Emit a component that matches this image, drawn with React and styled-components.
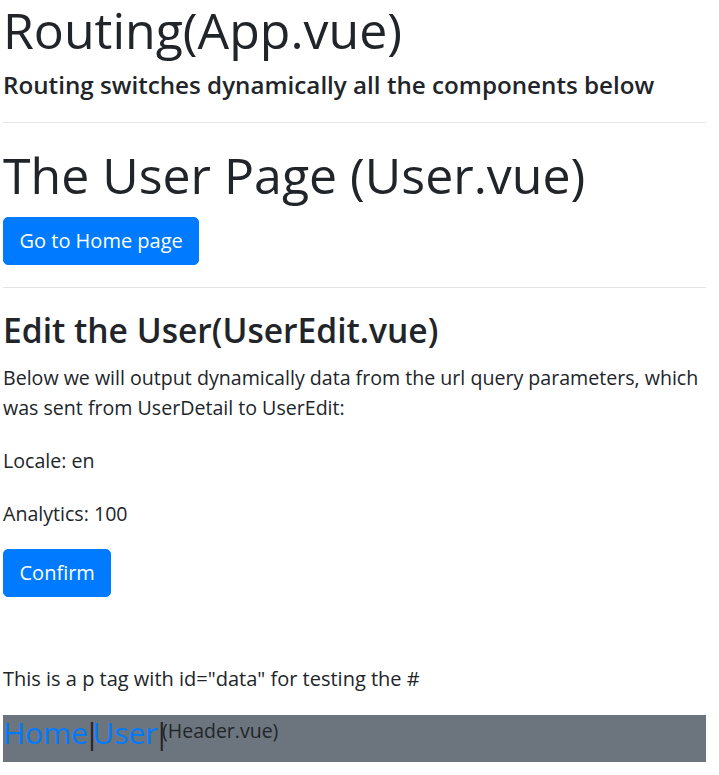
import React from 'react';
import styled, { createGlobalStyle } from 'styled-components';

const GlobalStyle = createGlobalStyle`
	* {
		box-sizing: border-box;
	}
	body {
		margin: 0;
		background: #fff;
		color: #212529;
		font-family: 'Open Sans', 'Noto Sans', sans-serif;
		font-size: 20px;
		line-height: 30px;
	}
`;

const Page = styled.div`
	padding: 0 13px 0 3px;
`;

const Title = styled.h1`
	margin: 0 0 ${(p) => p.$gap || 10}px;
	font-size: 50px;
	line-height: 60px;
	font-weight: 500;
`;

const Subtitle = styled.h5`
	margin: 0;
	font-size: 24.2px;
	line-height: 30px;
	font-weight: 600;
`;

const Rule = styled.hr`
	margin: ${(p) => p.$top}px 0 ${(p) => p.$bottom}px;
	border: 0;
	border-top: 1px solid rgba(0, 0, 0, 0.1);
`;

const Button = styled.button`
	display: inline-block;
	padding: 8px 15.5px;
	border: 1px solid #007bff;
	border-radius: 5px;
	background: #007bff;
	color: #fff;
	font-family: inherit;
	font-size: 20px;
	line-height: 30px;
	font-weight: 400;
	cursor: pointer;
`;

const Heading = styled.h3`
	margin: 0 0 12px;
	font-size: 33.6px;
	line-height: 42px;
	font-weight: 600;
`;

const Text = styled.p`
	margin: 0 0 ${(p) => p.$gap ?? 23}px;
	font-size: 19.6px;
`;

const Note = styled.p`
	margin: 67px 0 21px;
`;

const HeaderBar = styled.div`
	display: flex;
	align-items: flex-start;
	height: 47px;
	background: #6c757d;
`;

const Nav = styled.div`
	font-size: 30px;
	line-height: 36px;
	color: #212529;
	white-space: nowrap;
`;

const NavLink = styled.a`
	color: #007bff;
	text-decoration: none;
	cursor: pointer;
`;

// the bar glyph has a wide advance in this font, so pull it in tight
const Separator = styled.span`
	margin-left: -4px;
	letter-spacing: -8px;
`;

const Source = styled.span`
	margin-top: 1px;
	font-size: 19.5px;
	line-height: 30px;
	color: #212529;
`;

const App = () => {
	return (
		<Page>
			<GlobalStyle />
			<Title>Routing(App.vue)</Title>
			<Subtitle>Routing switches dynamically all the components below</Subtitle>
			<Rule $top={22} $bottom={22} />
			<Title $gap={12}>The User Page (User.vue)</Title>
			<Button>Go to Home page</Button>
			<Rule $top={22} $bottom={21} />
			<Heading>Edit the User(UserEdit.vue)</Heading>
			<Text>
				Below we will output dynamically data from the url query parameters,
				which was sent from UserDetail to UserEdit:
			</Text>
			<Text>Locale: en</Text>
			<Text $gap={20}>Analytics: 100</Text>
			<Button>Confirm</Button>
			<Note id='data'>This is a p tag with id="data" for testing the #</Note>
			<HeaderBar>
				<Nav>
					<NavLink>Home</NavLink>
					<Separator>|</Separator>
					<NavLink>User</NavLink>
					<Separator>|</Separator>
				</Nav>
				<Source>(Header.vue)</Source>
			</HeaderBar>
		</Page>
	);
};

export default App;
